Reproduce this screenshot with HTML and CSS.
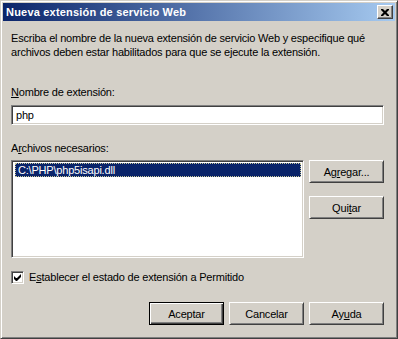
FILE: index.html
```html
<!DOCTYPE html>
<html>
<head>
    <title>Nueva extensión de servicio Web</title>
    <link rel="stylesheet" href="styles.css">
</head>
<body>
    <div class="window">
        <div class="titlebar">
            <span class="title">Nueva extensión de servicio Web</span>
            <span class="close-btn">
                <svg width="8" height="7" viewBox="0 0 8 7">
                    <path d="M0 0h2l2 2 2-2h2v1l-2.5 2.5 2.5 2.5v1h-2l-2-2-2 2h-2v-1l2.5-2.5-2.5-2.5z" fill="#000"/>
                </svg>
            </span>
        </div>

        <div class="content">
            <p class="desc">Escriba el nombre de la nueva extensión de servicio Web y especifique qué archivos deben estar habilitados para que se ejecute la extensión.</p>

            <label class="field-label" for="ext-name"><u>N</u>ombre de extensión:</label>
            <div class="textbox" id="ext-name">php</div>

            <label class="field-label files-label"><span>A<u>r</u>chivos necesarios:</span></label>
            <div class="files-row">
                <div class="listbox">
                    <div class="list-item selected">C:\PHP\php5isapi.dll</div>
                </div>
                <div class="side-buttons">
                    <button class="btn">Ag<u>r</u>egar...</button>
                    <button class="btn">Qui<u>t</u>ar</button>
                </div>
            </div>

            <div class="check-row">
                <span class="checkbox">
                    <svg width="7" height="7" viewBox="0 0 7 7">
                        <path d="M0 2v3l2 2h1l4-4v-3l-4 4h-1z" fill="#000"/>
                    </svg>
                </span>
                <span>E<u>s</u>tablecer el estado de extensión a Permitido</span>
            </div>

            <div class="dialog-buttons">
                <button class="btn default">Aceptar</button>
                <button class="btn">Cancelar</button>
                <button class="btn">Ay<u>u</u>da</button>
            </div>
        </div>
    </div>
</body>
</html>
```

FILE: styles.css
```css
body {
    margin: 0;
    font-family: "Liberation Sans", Arial, sans-serif;
    font-size: 11px;
    color: #000;
    background: #d4d0c8;
}

.window {
    width: 398px;
    height: 339px;
    box-sizing: border-box;
    background: #d4d0c8;
    border: 1px solid;
    border-color: #d4d0c8 #404040 #404040 #d4d0c8;
    box-shadow: inset 1px 1px #fff, inset -1px -1px #808080;
    padding: 2px;
}

.titlebar {
    height: 18px;
    display: flex;
    align-items: center;
    justify-content: space-between;
    padding: 0 2px 0 3px;
    background: linear-gradient(to right, #0a246a, #a6caf0);
}

.title {
    color: #fff;
    font-weight: bold;
    font-size: 11px;
    letter-spacing: 0.2px;
}

.close-btn {
    width: 16px;
    height: 14px;
    box-sizing: border-box;
    display: flex;
    align-items: center;
    justify-content: center;
    background: #d4d0c8;
    border: 1px solid;
    border-color: #fff #404040 #404040 #fff;
    box-shadow: inset -1px -1px #808080;
}

.content {
    padding: 10px 11px 0 8px;
    letter-spacing: -0.2px;
}

.desc {
    margin: 0;
    line-height: 14px;
}

.field-label {
    display: block;
    line-height: 14px;
    margin-top: 26px;
    margin-bottom: 6px;
}

.files-label {
    margin-top: 16px;
    margin-bottom: 5px;
}

.textbox {
    height: 20px;
    box-sizing: border-box;
    background: #fff;
    border: 1px solid;
    border-color: #808080 #fff #fff #808080;
    box-shadow: inset 1px 1px #404040, inset -1px -1px #d4d0c8;
    padding: 3px 4px;
    line-height: 13px;
}

.files-row {
    display: flex;
    gap: 5px;
}

.listbox {
    width: 293px;
    height: 98px;
    box-sizing: border-box;
    background: #fff;
    border: 1px solid;
    border-color: #808080 #fff #fff #808080;
    box-shadow: inset 1px 1px #404040, inset -1px -1px #d4d0c8;
    padding: 2px 2px 2px 3px;
}

.list-item {
    height: 14px;
    line-height: 12px;
    box-sizing: border-box;
    padding-left: 2px;
}

.selected {
    background: #0a246a;
    color: #fff;
    border: 1px dotted #c8c89a;
}

.side-buttons {
    display: flex;
    flex-direction: column;
    gap: 13px;
}

.btn {
    width: 75px;
    height: 23px;
    box-sizing: border-box;
    font-family: "Liberation Sans", Arial, sans-serif;
    font-size: 11px;
    letter-spacing: -0.2px;
    color: #000;
    background: #d4d0c8;
    border: 1px solid;
    border-color: #fff #404040 #404040 #fff;
    box-shadow: inset 1px 1px #d4d0c8, inset -1px -1px #808080;
    padding: 0;
    cursor: default;
}

.btn.default {
    border-color: #000;
    box-shadow: inset 1px 1px #fff, inset -1px -1px #404040, inset -2px -2px #808080;
}

.check-row {
    display: flex;
    align-items: center;
    gap: 5px;
    margin-top: 12px;
    line-height: 14px;
}

.checkbox {
    width: 13px;
    height: 13px;
    box-sizing: border-box;
    display: flex;
    align-items: center;
    justify-content: center;
    background: #fff;
    border: 1px solid;
    border-color: #808080 #fff #fff #808080;
    box-shadow: inset 1px 1px #404040, inset -1px -1px #d4d0c8;
}

.dialog-buttons {
    display: flex;
    justify-content: flex-end;
    gap: 5px;
    margin-top: 18px;
}
```
